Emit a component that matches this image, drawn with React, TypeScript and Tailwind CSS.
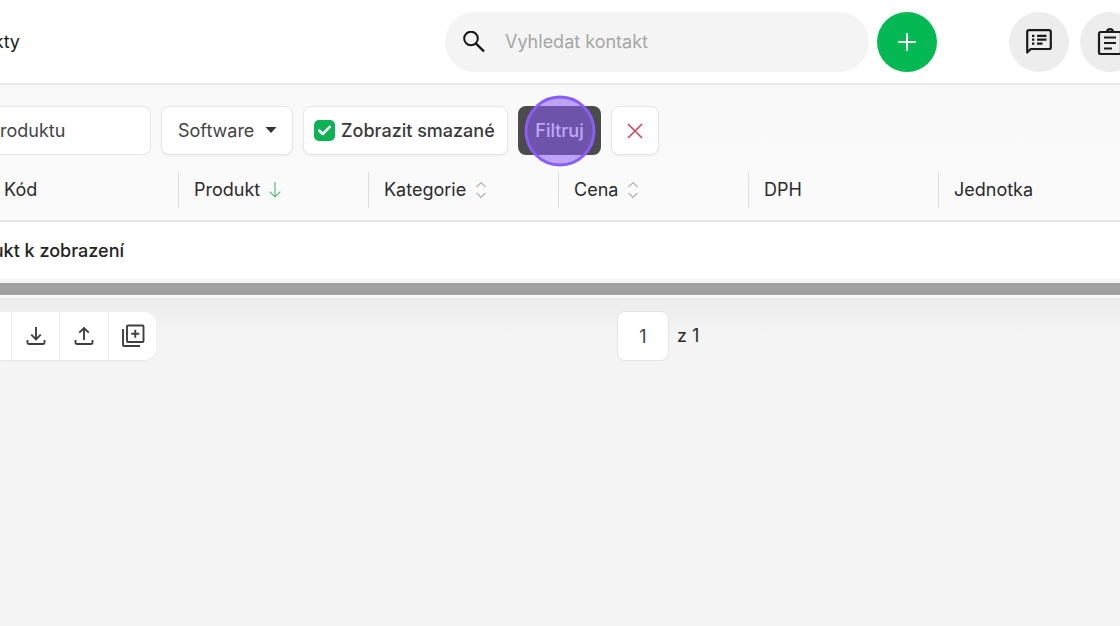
import React from 'react';

type SortState = 'none' | 'asc' | 'both';

interface Column {
  label: string;
  sort: SortState;
  width: string;
}

const columns: Column[] = [
  { label: 'Kód', sort: 'none', width: 'w-[178px]' },
  { label: 'Produkt', sort: 'asc', width: 'w-[190px]' },
  { label: 'Kategorie', sort: 'both', width: 'w-[190px]' },
  { label: 'Cena', sort: 'both', width: 'w-[190px]' },
  { label: 'DPH', sort: 'none', width: 'w-[190px]' },
  { label: 'Jednotka', sort: 'none', width: '' },
];

function SearchIcon() {
  return (
    <svg width="22" height="22" viewBox="0 0 22 22" fill="none" stroke="#151515" strokeWidth="2" aria-hidden="true">
      <circle cx="8" cy="7.500" r="6.800" />
      <path d="M12.800 12.300l8.200 8.200" strokeWidth="2.400" />
    </svg>
  );
}

function NotesIcon() {
  return (
    <svg width="28" height="28" viewBox="0 0 28 28" fill="none" stroke="#1c1c1c" strokeWidth="2.200" aria-hidden="true">
      <path d="M2.200 24.500V4Q2.200 2.200 4 2.200H24Q25.800 2.200 25.800 4V19.200Q25.800 21 24 21H5.700L2.200 24.500z" strokeLinejoin="round" />
      <path d="M7 7.800h2.400M7 11.700h2.400M7 15.600h2.400M12 7.800H21.500M12 11.700H21.500M12 15.600H17.500" />
    </svg>
  );
}

function ClipboardIcon() {
  return (
    <svg width="26" height="28" viewBox="0 0 26 28" fill="none" stroke="#1c1c1c" strokeWidth="2.200" aria-hidden="true">
      <rect x="2" y="4" width="22" height="22" rx="1.800" />
      <path d="M10 4Q10.200 1.200 13 1.200T16 4" />
      <path d="M7 9.500H19M7 15H19M7 20.500H15" />
    </svg>
  );
}

function TransferIcon({ up = false }: { up?: boolean }) {
  return (
    <svg width="20" height="20" viewBox="0 0 20 20" fill="none" stroke="#3f3f3f" strokeWidth="1.900" aria-hidden="true">
      <path d="M1.500 14v2.800Q1.500 18 2.700 18H17.300Q18.500 18 18.500 16.800V14" />
      {up ? <path d="M10 14V2M5.300 6.700L10 2l4.700 4.700" /> : <path d="M10 1v12.300M5.300 8.600L10 13.300l4.700-4.700" />}
    </svg>
  );
}

function AddCopyIcon() {
  return (
    <svg width="24" height="24" viewBox="0 0 24 24" fill="none" stroke="#3f3f3f" strokeWidth="1.900" aria-hidden="true">
      <rect x="6" y="1.500" width="16.500" height="16.500" rx="1" />
      <path d="M14.250 5.800v8M10.250 9.800h8" />
      <path d="M2 5V21Q2 22 3 22H19" />
    </svg>
  );
}

function SortIcon({ sort }: { sort: SortState }) {
  if (sort === 'asc') {
    return (
      <svg width="12" height="16" viewBox="0 0 12 16" fill="none" stroke="#5fb878" strokeWidth="1.200" aria-hidden="true">
        <path d="M6 0V15M0.700 9.700L6 15l5.300-5.300" />
      </svg>
    );
  }
  if (sort === 'both') {
    return (
      <svg width="12" height="18" viewBox="0 0 12 18" fill="none" stroke="#b4b4b4" strokeWidth="1.200" aria-hidden="true">
        <path d="M1.500 6L6 1.500L10.500 6M1.500 12L6 16.500L10.500 12" />
      </svg>
    );
  }
  return null;
}

function Header() {
  return (
    <header className="flex h-[85px] items-center border-b-2 border-[#e9e9e9] bg-white">
      <h1 className="mr-auto flex w-5 shrink-0 justify-end overflow-hidden text-lg text-[#1c1c1c]">kty</h1>
      <label className="flex h-[60px] w-[424px] items-center gap-5 rounded-full bg-[#f4f4f4] pl-[18px] pr-6">
        <SearchIcon />
        <input
          type="search"
          aria-label="Vyhledat kontakt"
          placeholder="Vyhledat kontakt"
          className="min-w-0 flex-1 bg-transparent text-lg outline-none placeholder:text-[#a6a6a6]"
        />
      </label>
      <button aria-label="Přidat" className="ml-2 flex size-[60px] shrink-0 items-center justify-center rounded-full bg-[#04b853]">
        <svg width="18" height="18" viewBox="0 0 18 18" stroke="#fff" strokeWidth="2" strokeLinecap="round" aria-hidden="true">
          <path d="M9 1v16M1 9h16" />
        </svg>
      </button>
      <div className="-mr-5 ml-[72px] flex shrink-0 gap-[11px]">
        <button aria-label="Poznámky" className="flex size-[60px] items-center justify-center rounded-full bg-[#ededed]">
          <NotesIcon />
        </button>
        <button aria-label="Úkoly" className="flex size-[60px] items-center justify-center rounded-full bg-[#ededed]">
          <ClipboardIcon />
        </button>
      </div>
    </header>
  );
}

function Filters() {
  return (
    <form className="flex gap-[10px] pt-[21px] text-lg text-[#444]" onSubmit={(e) => e.preventDefault()}>
      <input
        type="text"
        aria-label="Název produktu"
        defaultValue="roduktu"
        className="h-[49px] w-[151px] rounded-r-lg border border-l-0 border-[#e6e6e6] bg-white outline-none"
      />
      <div className="relative">
        <select
          aria-label="Kategorie"
          className="h-[49px] w-[132px] appearance-none rounded-lg border border-[#e6e6e6] bg-white pl-4 shadow-xs outline-none"
        >
          <option>Software</option>
        </select>
        <svg className="pointer-events-none absolute right-4 top-[21px]" width="12" height="6" viewBox="0 0 12 6" fill="#333" aria-hidden="true">
          <path d="M0.500 0h11L6 6z" />
        </svg>
      </div>
      <label className="flex h-[49px] w-[205px] items-center gap-[6px] rounded-lg border border-[#e6e6e6] bg-white pl-[10px] font-medium text-[#3a3a3a] shadow-xs">
        <span className="relative flex">
          <input type="checkbox" defaultChecked className="size-[21px] appearance-none rounded-[5px] bg-[#0fb155]" />
          <svg className="pointer-events-none absolute left-1 top-[5px]" width="13" height="11" viewBox="0 0 13 11" fill="none" stroke="#fff" strokeWidth="2.500" aria-hidden="true">
            <path d="M1.200 5.500L4.700 9L11.800 1.800" strokeLinecap="round" strokeLinejoin="round" />
          </svg>
        </span>
        Zobrazit smazané
      </label>
      <div className="relative">
        <button type="submit" className="h-[49px] w-[83px] rounded-lg bg-[#4b4b4b] font-medium text-white">
          Filtruj
        </button>
        {/* Click marker */}
        <span className="pointer-events-none absolute left-1/2 top-1/2 size-[71px] -translate-x-1/2 -translate-y-1/2 rounded-full border-3 border-[#8b5cf6] bg-[#8b5cf6]/55" />
      </div>
      <button type="reset" aria-label="Zrušit filtr" className="flex h-[49px] w-12 items-center justify-center rounded-lg border border-[#e6e6e6] bg-white shadow-xs">
        <svg width="16" height="16" viewBox="0 0 16 16" stroke="#cf4a60" strokeWidth="1.700" aria-hidden="true">
          <path d="M1 1l14 14M15 1L1 15" />
        </svg>
      </button>
    </form>
  );
}

function ProductTable() {
  return (
    <table className="w-full table-fixed text-left text-lg text-[#2b2b2b]">
      <thead>
        <tr className="border-b-2 border-[#e3e3e3]">
          {columns.map((col, i) => (
            <th key={col.label} className={`${col.width} h-[66px] pt-1 font-normal`}>
              <div className={`flex h-9 items-center gap-[9px] ${i === 0 ? 'pl-1' : 'border-l border-[#dedede] pl-[15px]'}`}>
                {col.label}
                <SortIcon sort={col.sort} />
              </div>
            </th>
          ))}
        </tr>
      </thead>
      <tbody>
        <tr className="bg-white">
          <td colSpan={columns.length} className="h-[58px] font-medium text-[#242424]">
            <div className="flex w-[124px] justify-end overflow-hidden whitespace-nowrap">ukt k zobrazení</div>
          </td>
        </tr>
      </tbody>
    </table>
  );
}

function Footer() {
  const cell = 'flex h-12 items-center justify-center border-r border-[#ececec]';
  return (
    <footer className="grid grid-cols-[55%_1fr] bg-linear-to-b from-[#ececec] to-[#f4f4f4] to-40% pb-6 pt-[13px] text-lg text-[#2b2b2b]">
      <div className="flex items-center">
        <div className="flex overflow-hidden rounded-r-xl bg-white shadow-xs">
          <span className={`${cell} w-3`} />
          <button aria-label="Stáhnout" className={`${cell} w-12`}>
            <TransferIcon />
          </button>
          <button aria-label="Nahrát" className={`${cell} w-[49px]`}>
            <TransferIcon up />
          </button>
          <button aria-label="Přidat kopii" className="flex h-12 w-[47px] items-center justify-center">
            <AddCopyIcon />
          </button>
        </div>
      </div>
      <label className="flex items-center gap-2 pl-px">
        <input
          type="text"
          aria-label="Stránka"
          defaultValue="1"
          className="h-[50px] w-[52px] rounded-lg border border-[#e4e4e4] bg-white text-center text-[#444] outline-none"
        />
        z 1
      </label>
    </footer>
  );
}

export default function App() {
  return (
    <div className="min-h-screen overflow-hidden bg-[#f4f4f4] font-['Inter',sans-serif]">
      <Header />
      <main>
        <section className="bg-linear-to-b from-[#f9f9f9] to-[#fbfbfb]">
          <Filters />
          <ProductTable />
          <div className="h-[19px] border-b-3 border-t-4 border-b-[#fafafa] border-t-[#f6f6f6] bg-[#a1a1a1]" />
        </section>
        <Footer />
      </main>
    </div>
  );
}
